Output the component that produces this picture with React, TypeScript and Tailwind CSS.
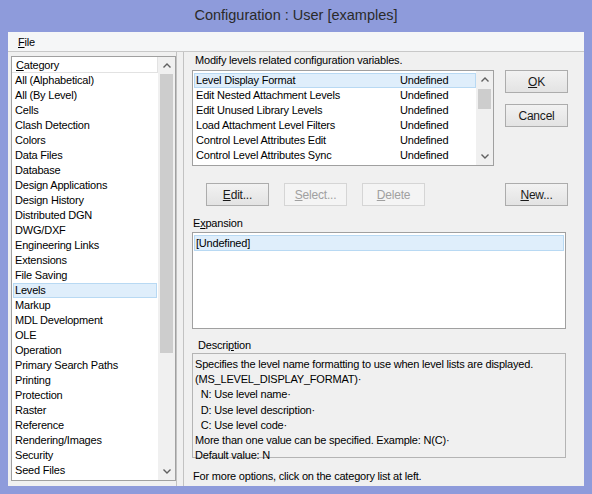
import React from "react";

const categories = [
  "All (Alphabetical)",
  "All (By Level)",
  "Cells",
  "Clash Detection",
  "Colors",
  "Data Files",
  "Database",
  "Design Applications",
  "Design History",
  "Distributed DGN",
  "DWG/DXF",
  "Engineering Links",
  "Extensions",
  "File Saving",
  "Levels",
  "Markup",
  "MDL Development",
  "OLE",
  "Operation",
  "Primary Search Paths",
  "Printing",
  "Protection",
  "Raster",
  "Reference",
  "Rendering/Images",
  "Security",
  "Seed Files",
];

const variables = [
  "Level Display Format",
  "Edit Nested Attachment Levels",
  "Edit Unused Library Levels",
  "Load Attachment Level Filters",
  "Control Level Attributes Edit",
  "Control Level Attributes Sync",
];

const description = [
  "Specifies the level name formatting to use when level lists are displayed.",
  "(MS_LEVEL_DISPLAY_FORMAT)·",
  "\u00a0\u00a0N: Use level name·",
  "\u00a0\u00a0D: Use level description·",
  "\u00a0\u00a0C: Use level code·",
  "More than one value can be specified. Example: N(C)·",
  "Default value: N",
];

function Chevron({ up }: { up?: boolean }) {
  return (
    <svg width="8" height="5" viewBox="0 0 8 5">
      <polyline
        points={up ? "0.5,4.5 4,1 7.5,4.5" : "0.5,0.5 4,4 7.5,0.5"}
        fill="none"
        stroke="#606060"
        strokeWidth="1.4"
      />
    </svg>
  );
}

function Button({
  children,
  disabled,
  className,
}: {
  children: React.ReactNode;
  disabled?: boolean;
  className?: string;
}) {
  return (
    <div
      className={
        "w-[63px] h-[23px] flex items-center justify-center border text-[12px] " +
        (disabled
          ? "border-[#d5d5d5] bg-[#f4f4f4] text-[#a0a0a0] "
          : "border-[#acacac] bg-gradient-to-b from-[#f2f2f2] to-[#e3e3e3] text-[#1a1a1a] ") +
        (className ?? "")
      }
    >
      {children}
    </div>
  );
}

export default function App() {
  return (
    <div
      className="w-[592px] h-[494px] bg-[#8e9bdb] flex flex-col text-[11px] tracking-[-0.2px] text-[#000]"
      style={{ fontFamily: '"Liberation Sans", Arial, sans-serif' }}
    >
      <div className="h-[32px] flex items-center justify-center text-[14.5px] tracking-normal text-[#2a2a2a]">
        Configuration : User [examples]
      </div>

      <div className="flex-1 mx-[8px] mb-[8px] bg-[#f0f0f0] flex flex-col">
        <div className="h-[20px] bg-[#f5f6f7] border-b border-[#c8c8c8] flex items-center pl-[10px] pt-[1px]">
          <span>
            <span className="underline">F</span>ile
          </span>
        </div>

        <div className="flex flex-1">
          {/* left pane */}
          <div className="w-[169px] pl-[3px] pt-[4px] pb-[5px] border-r border-[#c2c2c2]">
            <div className="w-[165px] h-full border border-[#a0a0a0] bg-white flex">
              <div className="flex-1 flex flex-col">
                <div className="h-[16px] border-b border-r border-[#e2e2e2] flex items-center pl-[4px] pt-[1px]">
                  <span>
                    <span className="underline">C</span>ategory
                  </span>
                </div>
                <div className="pl-[1px] pr-[1px]">
                  {categories.map((c) =>
                    c === "Levels" ? (
                      <div
                        key={c}
                        className="h-[15px] leading-[13px] pl-[1px] bg-[#dfeefb] border border-[#b8d9f3]"
                      >
                        {c}
                      </div>
                    ) : (
                      <div key={c} className="h-[15px] leading-[15px] pl-[2px]">
                        {c}
                      </div>
                    )
                  )}
                </div>
              </div>
              <div className="w-[17px] bg-[#f0f0f0] flex flex-col items-center">
                <div className="h-[17px] flex items-center justify-center">
                  <Chevron up />
                </div>
                <div className="w-[13px] h-[279px] bg-[#cdcdcd]" />
                <div className="flex-1" />
                <div className="h-[17px] flex items-center justify-center">
                  <Chevron />
                </div>
              </div>
            </div>
          </div>

          {/* right pane */}
          <div className="flex-1 ml-[6px] border-l border-[#c2c2c2] pl-[8px] flex flex-col">
            <div className="mt-[1px] h-[15px] leading-[15px] pl-[3px]">
              Modify levels related configuration variables.
            </div>

            <div className="flex mt-[2px]">
              <div className="w-[302px] h-[96px] border border-[#a0a0a0] bg-white flex">
                <div className="flex-1 pt-[2px] pl-[1px]">
                  {variables.map((v, i) => (
                    <div
                      key={v}
                      className={
                        "h-[15px] flex border " +
                        (i === 0 ? "bg-[#dfeefb] border-[#b8d9f3]" : "border-transparent")
                      }
                    >
                      <span className="w-[205px] pl-[1px] leading-[13px]">{v}</span>
                      <span className="leading-[13px]">Undefined</span>
                    </div>
                  ))}
                </div>
                <div className="w-[17px] bg-[#f0f0f0] flex flex-col items-center">
                  <div className="h-[17px] flex items-center justify-center">
                    <Chevron up />
                  </div>
                  <div className="w-[13px] h-[20px] mt-[1px] bg-[#cdcdcd]" />
                  <div className="flex-1" />
                  <div className="h-[17px] flex items-center justify-center">
                    <Chevron />
                  </div>
                </div>
              </div>

              <div className="ml-[11px] flex flex-col gap-[11px]">
                <Button>
                  <span className="underline">O</span>K
                </Button>
                <Button>Cancel</Button>
              </div>
            </div>

            <div className="flex mt-[17px] h-[23px]">
              <Button className="ml-[14px]">
                <span className="underline">E</span>dit...
              </Button>
              <Button disabled className="ml-[15px]">
                <span className="underline">S</span>elect...
              </Button>
              <Button disabled className="ml-[15px]">
                <span className="underline">D</span>elete
              </Button>
              <Button className="ml-[80px]">
                <span className="underline">N</span>ew...
              </Button>
            </div>

            <div className="mt-[10px] h-[15px] leading-[15px] pl-[1px]">
              E<span className="underline">x</span>pansion
            </div>
            <div className="mt-[1px] w-[374px] h-[97px] border border-[#a0a0a0] bg-white pt-[2px] px-[1px]">
              <div className="h-[16px] leading-[14px] pl-[1px] bg-[#dfeefb] border border-[#b8d9f3]">
                [Undefined]
              </div>
            </div>

            <div className="mt-[9px] h-[15px] leading-[15px] pl-[6px]">
              Descri<span className="underline">p</span>tion
            </div>
            <div className="w-[374px] h-[105px] border border-[#b4b4b4] bg-[#f0f0f0] pt-[3px] pl-[2px]">
              {description.map((d) => (
                <div key={d} className="h-[15.2px] leading-[15.2px] whitespace-pre">
                  {d}
                </div>
              ))}
            </div>

            <div className="mt-[11px] h-[15px] leading-[15px] pl-[1px]">
              For more options, click on the category list at left.
            </div>
          </div>
        </div>
      </div>
    </div>
  );
}
